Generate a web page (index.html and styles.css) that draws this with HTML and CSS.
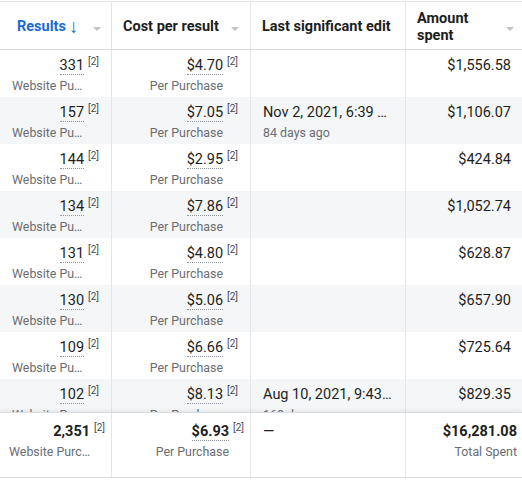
FILE: index.html
```html
<!DOCTYPE html>
<html lang="en">
<head>
  <meta charset="UTF-8"/>
  <title>Ads Results Table</title>
  <link rel="stylesheet" href="styles.css">
</head>
<body>
  <div class="table">
    <div class="row head">
      <div class="cell first"><span class="sorted">Results<span class="arrow">↓</span></span><span class="caret"></span></div>
      <div class="cell">Cost per result<span class="caret"></span></div>
      <div class="cell">Last significant edit</div>
      <div class="cell last"><span class="two-line">Amount<br>spent</span><span class="caret"></span></div>
    </div>

    <div class="body">
      <div class="row">
        <div class="cell num"><div class="val"><span class="dot">331</span><sup>[2]</sup></div><div class="sub">Website Purchases</div></div>
        <div class="cell num"><div class="val"><span class="dot">$4.70</span><sup>[2]</sup></div><div class="sub">Per Purchase</div></div>
        <div class="cell date"></div>
        <div class="cell num last"><div class="val">$1,556.58</div></div>
      </div>
      <div class="row alt">
        <div class="cell num"><div class="val"><span class="dot">157</span><sup>[2]</sup></div><div class="sub">Website Purchases</div></div>
        <div class="cell num"><div class="val"><span class="dot">$7.05</span><sup>[2]</sup></div><div class="sub">Per Purchase</div></div>
        <div class="cell date"><div class="val">Nov 2, 2021, 6:39 PM</div><div class="sub">84 days ago</div></div>
        <div class="cell num last"><div class="val">$1,106.07</div></div>
      </div>
      <div class="row">
        <div class="cell num"><div class="val"><span class="dot">144</span><sup>[2]</sup></div><div class="sub">Website Purchases</div></div>
        <div class="cell num"><div class="val"><span class="dot">$2.95</span><sup>[2]</sup></div><div class="sub">Per Purchase</div></div>
        <div class="cell date"></div>
        <div class="cell num last"><div class="val">$424.84</div></div>
      </div>
      <div class="row alt">
        <div class="cell num"><div class="val"><span class="dot">134</span><sup>[2]</sup></div><div class="sub">Website Purchases</div></div>
        <div class="cell num"><div class="val"><span class="dot">$7.86</span><sup>[2]</sup></div><div class="sub">Per Purchase</div></div>
        <div class="cell date"></div>
        <div class="cell num last"><div class="val">$1,052.74</div></div>
      </div>
      <div class="row">
        <div class="cell num"><div class="val"><span class="dot">131</span><sup>[2]</sup></div><div class="sub">Website Purchases</div></div>
        <div class="cell num"><div class="val"><span class="dot">$4.80</span><sup>[2]</sup></div><div class="sub">Per Purchase</div></div>
        <div class="cell date"></div>
        <div class="cell num last"><div class="val">$628.87</div></div>
      </div>
      <div class="row alt">
        <div class="cell num"><div class="val"><span class="dot">130</span><sup>[2]</sup></div><div class="sub">Website Purchases</div></div>
        <div class="cell num"><div class="val"><span class="dot">$5.06</span><sup>[2]</sup></div><div class="sub">Per Purchase</div></div>
        <div class="cell date"></div>
        <div class="cell num last"><div class="val">$657.90</div></div>
      </div>
      <div class="row">
        <div class="cell num"><div class="val"><span class="dot">109</span><sup>[2]</sup></div><div class="sub">Website Purchases</div></div>
        <div class="cell num"><div class="val"><span class="dot">$6.66</span><sup>[2]</sup></div><div class="sub">Per Purchase</div></div>
        <div class="cell date"></div>
        <div class="cell num last"><div class="val">$725.64</div></div>
      </div>
      <div class="row alt">
        <div class="cell num"><div class="val"><span class="dot">102</span><sup>[2]</sup></div><div class="sub">Website Purchases</div></div>
        <div class="cell num"><div class="val"><span class="dot">$8.13</span><sup>[2]</sup></div><div class="sub">Per Purchase</div></div>
        <div class="cell date"><div class="val">Aug 10, 2021, 9:43 AM</div><div class="sub">168 days ago</div></div>
        <div class="cell num last"><div class="val">$829.35</div></div>
      </div>
    </div>

    <div class="row foot">
      <div class="cell num"><div class="val"><b>2,351</b><sup>[2]</sup></div><div class="sub">Website Purchases</div></div>
      <div class="cell num"><div class="val"><b class="dot">$6.93</b><sup>[2]</sup></div><div class="sub">Per Purchase</div></div>
      <div class="cell date"><div class="val">—</div></div>
      <div class="cell num last"><div class="val"><b>$16,281.08</b></div><div class="sub">Total Spent</div></div>
    </div>
  </div>
</body>
</html>
```

FILE: styles.css
```css
* {
  box-sizing: border-box;
}

body {
  margin: 0;
  font-family: Roboto, "Liberation Sans", sans-serif;
  color: #1c1e21;
  background: #fff;
}

.table {
  width: 522px;
  margin-top: 1px;
  border-top: 1px solid #e4e6ea;
}

.row {
  display: grid;
  grid-template-columns: 112px 139px 155px 116px;
  height: 47px;
}

.cell {
  border-right: 1px solid #e4e6ea;
  padding: 6px 12px 0 12px;
  min-width: 0;
}

.cell.last {
  border-right: none;
  padding-right: 11px;
}

/* header */
.head {
  height: 48px;
  border-bottom: 1px solid #dadde1;
  font-weight: bold;
  font-size: 14.5px;
}

.head .cell {
  position: relative;
  display: flex;
  align-items: center;
  padding: 2px 11px 0 11px;
}

.head .cell.first {
  padding-left: 17px;
}

.sorted {
  color: #1b6ad0;
  display: flex;
  align-items: center;
}

.arrow {
  font-weight: normal;
  font-size: 19px;
  margin-left: 3px;
  margin-top: -1px;
}

.two-line {
  line-height: 17px;
}

.caret {
  position: absolute;
  top: 25px;
  right: 11px;
  width: 0;
  height: 0;
  border-left: 4px solid transparent;
  border-right: 4px solid transparent;
  border-top: 4px solid #bec3c9;
}

.head .cell.first .caret {
  right: 10px;
}

.head .cell.last .caret {
  right: 8px;
}

/* body */
.body {
  height: 362px;
  overflow: hidden;
}

.alt {
  background: #f5f6f7;
}

.val {
  font-size: 14.5px;
  line-height: 20px;
  white-space: nowrap;
  overflow: hidden;
  text-overflow: ellipsis;
}

.sub {
  font-size: 12.4px;
  line-height: 20px;
  color: #6a6d71;
  white-space: nowrap;
  overflow: hidden;
  text-overflow: ellipsis;
}

.num {
  text-align: right;
}

.num .sub {
  padding-right: 15px;
}

.num.last .sub {
  padding-right: 0;
}

.date {
  padding-right: 11px;
}

.dot {
  border-bottom: 1px dotted #8d949e;
  line-height: 16px;
  display: inline-block;
}

sup {
  font-size: 10px;
  color: #444950;
  margin-left: 4px;
  vertical-align: 5px;
  line-height: 0;
}

/* footer totals */
.foot {
  height: 66px;
  border-top: 1px solid #dadde1;
  border-bottom: 1px solid #dadde1;
  box-shadow: 0 -2px 3px rgba(0, 0, 0, 0.06);
  position: relative;
  background: #fff;
}

.foot .cell {
  padding-top: 9px;
  padding-right: 6px;
  padding-left: 9px;
}

.foot .cell.date {
  padding-left: 12px;
}

.foot .cell.last {
  padding-right: 5px;
}

.foot b {
  font-weight: bold;
}
```
